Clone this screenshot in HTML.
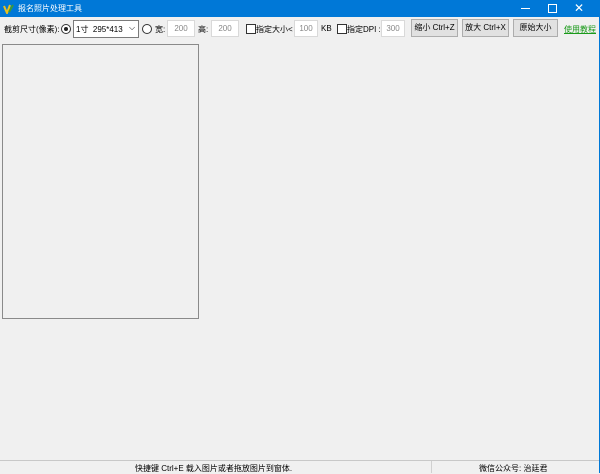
<html><head><style>
body{margin:0;width:600px;height:473px;background:#f0f0f0;font-family:"Liberation Sans","Noto Sans CJK SC",sans-serif;font-size:8px;color:#000;position:relative;overflow:hidden}
.a{position:absolute;white-space:nowrap}
.tb{left:0;top:0;width:600px;height:17px;background:#0078d7;color:#fff}
.inp{position:absolute;background:#fff;border:1px solid #d9d9d9;color:#888;text-align:center;height:15px;line-height:15px;font-size:8px}
.btn{position:absolute;background:#e1e1e1;border:1px solid #adadad;height:16px;line-height:16px;text-align:center;font-size:8px}
.rad{position:absolute;width:8px;height:8px;border:1px solid #333;border-radius:50%;background:#fff}
.chk{position:absolute;width:8px;height:8px;border:1px solid #333;background:#fff}
</style></head><body>
<div class="a tb"></div>
<svg class="a" style="left:3px;top:3px" width="11" height="11"><path d="M1 3 L4 10 L7 2" stroke="#e8c020" stroke-width="2" fill="none"/><path d="M6 9 L10 2" stroke="#3a9a3a" stroke-width="2"/></svg>
<div class="a" style="left:18px;top:3px;color:#fff;font-size:8px">报名照片处理工具</div>
<div class="a" style="left:521px;top:8px;width:9px;height:1px;background:#fff"></div>
<div class="a" style="left:548px;top:4px;width:7px;height:7px;border:1px solid #fff"></div>
<div class="a" style="left:574px;top:1px;color:#fff;font-size:12px">✕</div>
<div class="a" style="left:599px;top:17px;width:1px;height:456px;background:#0078d7"></div>

<div class="a" style="left:4px;top:24px">截剪尺寸(像素):</div>
<div class="rad" style="left:61px;top:24px"></div><div class="a" style="left:64px;top:27px;width:4px;height:4px;border-radius:50%;background:#222"></div>
<div class="a" style="left:73px;top:20px;width:64px;height:16px;background:#fff;border:1px solid #7a7a7a"></div>
<div class="a" style="left:76px;top:24px">1寸 &nbsp;295*413</div>
<div class="a" style="left:129px;top:23px;font-size:8px">⌵</div>
<div class="rad" style="left:142px;top:24px"></div>
<div class="a" style="left:155px;top:24px">宽:</div>
<div class="inp" style="left:167px;top:20px;width:26px">200</div>
<div class="a" style="left:198px;top:24px">高:</div>
<div class="inp" style="left:211px;top:20px;width:26px">200</div>
<div class="chk" style="left:246px;top:24px"></div>
<div class="a" style="left:256px;top:24px">指定大小&lt;</div>
<div class="inp" style="left:294px;top:20px;width:22px">100</div>
<div class="a" style="left:321px;top:24px">KB</div>
<div class="chk" style="left:337px;top:24px"></div>
<div class="a" style="left:347px;top:24px">指定DPI :</div>
<div class="inp" style="left:381px;top:20px;width:22px">300</div>
<div class="btn" style="left:411px;top:19px;width:45px">缩小 Ctrl+Z</div>
<div class="btn" style="left:462px;top:19px;width:45px">放大 Ctrl+X</div>
<div class="btn" style="left:513px;top:19px;width:43px">原始大小</div>
<div class="a" style="left:564px;top:24px;color:#1a9a1a;text-decoration:underline">使用教程</div>

<div class="a" style="left:2px;top:44px;width:195px;height:273px;border:1px solid #8a8a8a;background:#f0f0f0"></div>

<div class="a" style="left:0;top:460px;width:599px;height:1px;background:#c8c8c8"></div>
<div class="a" style="left:431px;top:461px;width:1px;height:12px;background:#d0d0d0"></div>
<div class="a" style="left:135px;top:463px">快捷键 Ctrl+E 载入图片或者拖放图片到窗体.</div>
<div class="a" style="left:479px;top:463px">微信公众号: 治廷君</div>
</body></html>
